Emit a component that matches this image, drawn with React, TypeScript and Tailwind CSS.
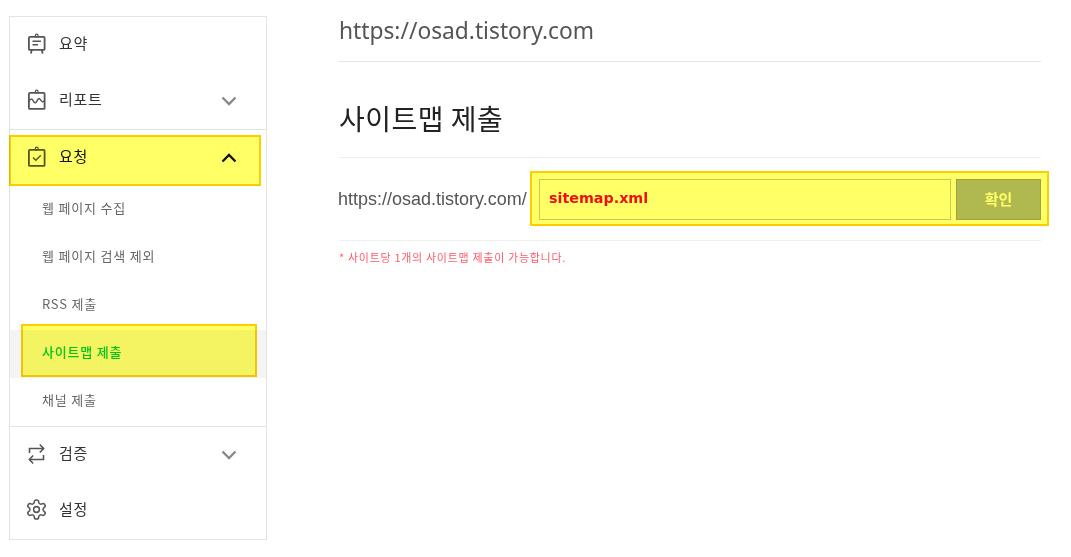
import React from "react";

const kr = "font-['Noto_Sans_CJK_KR','Noto_Sans',sans-serif]";

const Svg = ({ children }: { children: React.ReactNode }) => (
  <svg width="20" height="22" viewBox="0 0 20 22" fill="none" stroke="#555" strokeWidth="1.8" className="shrink-0 mt-[-3px]">
    {children}
  </svg>
);

const IconBoard = () => (
  <Svg>
    <rect x="1.9" y="3.9" width="15.7" height="13" rx="1" />
    <circle cx="9.75" cy="2.5" r="1.4" strokeWidth="1.2" />
    <path d="M5.5 8.2h8.5M5.5 11.7h5.5" strokeWidth="1.5" />
    <path d="M4.8 17l-1 3.4M14.7 17l1 3.4" />
  </Svg>
);
const IconReport = () => (
  <Svg>
    <rect x="1.9" y="3.9" width="15.7" height="16" rx="1" />
    <circle cx="9.75" cy="2.5" r="1.4" strokeWidth="1.2" />
    <path d="M2 12.5c1.5-3 3-3 4-1s2.5 3.5 3.7 1 2.2-4 3.6-2 1.8 3 4.4 1.5" strokeWidth="1.5" />
  </Svg>
);
const IconCheck = () => (
  <Svg>
    <rect x="1.9" y="3.9" width="15.7" height="16" rx="1" />
    <circle cx="9.75" cy="2.5" r="1.4" strokeWidth="1.2" />
    <path d="M6 11.5l2.8 2.8 5-5" strokeWidth="1.4" />
  </Svg>
);
const IconRepeat = () => (
  <Svg>
    <path d="M2.5 10V5.5h14" strokeWidth="1.6" />
    <path d="M12.8 1.5l3.8 4-3.8 4" strokeWidth="1.6" />
    <path d="M16.5 12v4.5h-14" strokeWidth="1.6" />
    <path d="M6.2 12.5l-3.8 4 3.8 4" strokeWidth="1.6" />
  </Svg>
);
const IconGear = () => (
  <svg width="23" height="23" viewBox="0 0 24 24" fill="none" stroke="#555" strokeWidth="1.6" strokeLinejoin="round" className="shrink-0 ml-[-2px] mt-[-3px]">
    <path d="M12.22 2h-.44a2 2 0 0 0-2 2v.18a2 2 0 0 1-1 1.73l-.43.25a2 2 0 0 1-2 0l-.15-.08a2 2 0 0 0-2.73.73l-.22.38a2 2 0 0 0 .73 2.73l.15.1a2 2 0 0 1 1 1.72v.51a2 2 0 0 1-1 1.74l-.15.09a2 2 0 0 0-.73 2.73l.22.38a2 2 0 0 0 2.73.73l.15-.08a2 2 0 0 1 2 0l.43.25a2 2 0 0 1 1 1.73V20a2 2 0 0 0 2 2h.44a2 2 0 0 0 2-2v-.18a2 2 0 0 1 1-1.73l.43-.25a2 2 0 0 1 2 0l.15.08a2 2 0 0 0 2.73-.73l.22-.39a2 2 0 0 0-.73-2.73l-.15-.08a2 2 0 0 1-1-1.74v-.5a2 2 0 0 1 1-1.74l.15-.09a2 2 0 0 0 .73-2.73l-.22-.38a2 2 0 0 0-2.73-.73l-.15.08a2 2 0 0 1-2 0l-.43-.25a2 2 0 0 1-1-1.73V4a2 2 0 0 0-2-2z" />
    <circle cx="12" cy="12" r="3" />
  </svg>
);
const Chevron = ({ up, color }: { up?: boolean; color: string }) => (
  <svg width="16" height="10" viewBox="0 0 16 10" fill="none" stroke={color} strokeWidth="2.3" className="ml-auto mr-[29px] shrink-0">
    <path d={up ? "M1.5 8.5L8 2l6.5 6.5" : "M1.5 1.5L8 8l6.5-6.5"} />
  </svg>
);

const Row = ({ icon, label, chevron, up, dark, children }: { icon: React.ReactNode; label: string; chevron?: boolean; up?: boolean; dark?: boolean; children?: React.ReactNode }) => (
  <div className="relative flex h-[56px] items-center pl-[17px]">
    <span className="flex w-[32px] shrink-0">{icon}</span>
    <span className={`text-[15px] tracking-[0.7px] font-normal mt-[-4px] ${dark ? "text-[#111]" : "text-[#333]"}`}>{label}</span>
    {chevron && <Chevron up={up} color={up ? "#111" : "#888"} />}
    {children}
  </div>
);

const Sub = ({ label, active, children }: { label: string; active?: boolean; children?: React.ReactNode }) => (
  <div className={`relative flex h-[48px] items-center pl-[32px] text-[13px] tracking-[0.8px] ${active ? "bg-[#f4f4f4] text-[#00c73c] font-medium" : "text-[#666] font-normal"}`}>
    <span className="mt-[-4px]">{label}</span>
    {children}
  </div>
);

const Mark = ({ className }: { className: string }) => (
  <div className={`absolute bg-[#ffff66] border-2 border-[#ffcc00] mix-blend-multiply ${className}`} />
);

export default function App() {
  return (
    <div className={`flex h-[557px] w-[1071px] overflow-hidden bg-white ${kr}`}>
      <aside className="ml-[9px] mt-[16px] h-[524px] w-[258px] shrink-0 border border-[#e3e3e3] bg-white">
        <Row icon={<IconBoard />} label="요약" />
        <Row icon={<IconReport />} label="리포트" chevron />
        <div className="border-t border-[#e3e3e3]">
          <Row icon={<IconCheck />} label="요청" chevron up dark>
            <Mark className="left-[-1px] top-[5px] h-[51px] w-[252px]" />
          </Row>
          <Sub label="웹 페이지 수집" />
          <Sub label="웹 페이지 검색 제외" />
          <Sub label="RSS 제출" />
          <Sub label="사이트맵 제출" active>
            <Mark className="left-[11px] top-[-6px] h-[53px] w-[236px]" />
          </Sub>
          <Sub label="채널 제출" />
        </div>
        <div className="border-t border-[#e3e3e3]">
          <Row icon={<IconRepeat />} label="검증" chevron />
          <Row icon={<IconGear />} label="설정" />
        </div>
      </aside>
      <main className="ml-[72px] w-[702px] shrink-0">
        <div className="flex h-[62px] items-center border-b border-[#e6e6e6] pt-[1px] text-[22.75px] text-[#555] font-['Noto_Sans',sans-serif]">
          https://osad.tistory.com
        </div>
        <div className="flex h-[96px] items-center border-b border-[#f0f0f0] pt-[17px] text-[28px] font-normal tracking-[0.5px] text-[#222]">
          사이트맵 제출
        </div>
        <div className="relative flex h-[83px] items-center border-b border-[#f0f0f0]">
          <span className="ml-[-1px] w-[201px] shrink-0 text-[18px] text-[#555] font-['Liberation_Sans',sans-serif]">https://osad.tistory.com/</span>
          <div className="flex h-[41px] w-[412px] items-center border border-[#c8c8c8] pl-[9px] text-[14.3px] font-bold text-[#f01030] font-['DejaVu_Sans',sans-serif]">
            sitemap.xml
          </div>
          <button className="ml-[5px] h-[41px] w-[85px] border border-[#a0a0a0] bg-[#b0b8c8] text-[15px] font-bold text-white">
            확인
          </button>
          <Mark className="left-[191px] top-[13px] h-[55px] w-[519px]" />
        </div>
        <p className="mt-[8px] text-[11px] tracking-[0.7px] font-normal text-[#ff5a6a]">* 사이트당 1개의 사이트맵 제출이 가능합니다.</p>
      </main>
    </div>
  );
}
